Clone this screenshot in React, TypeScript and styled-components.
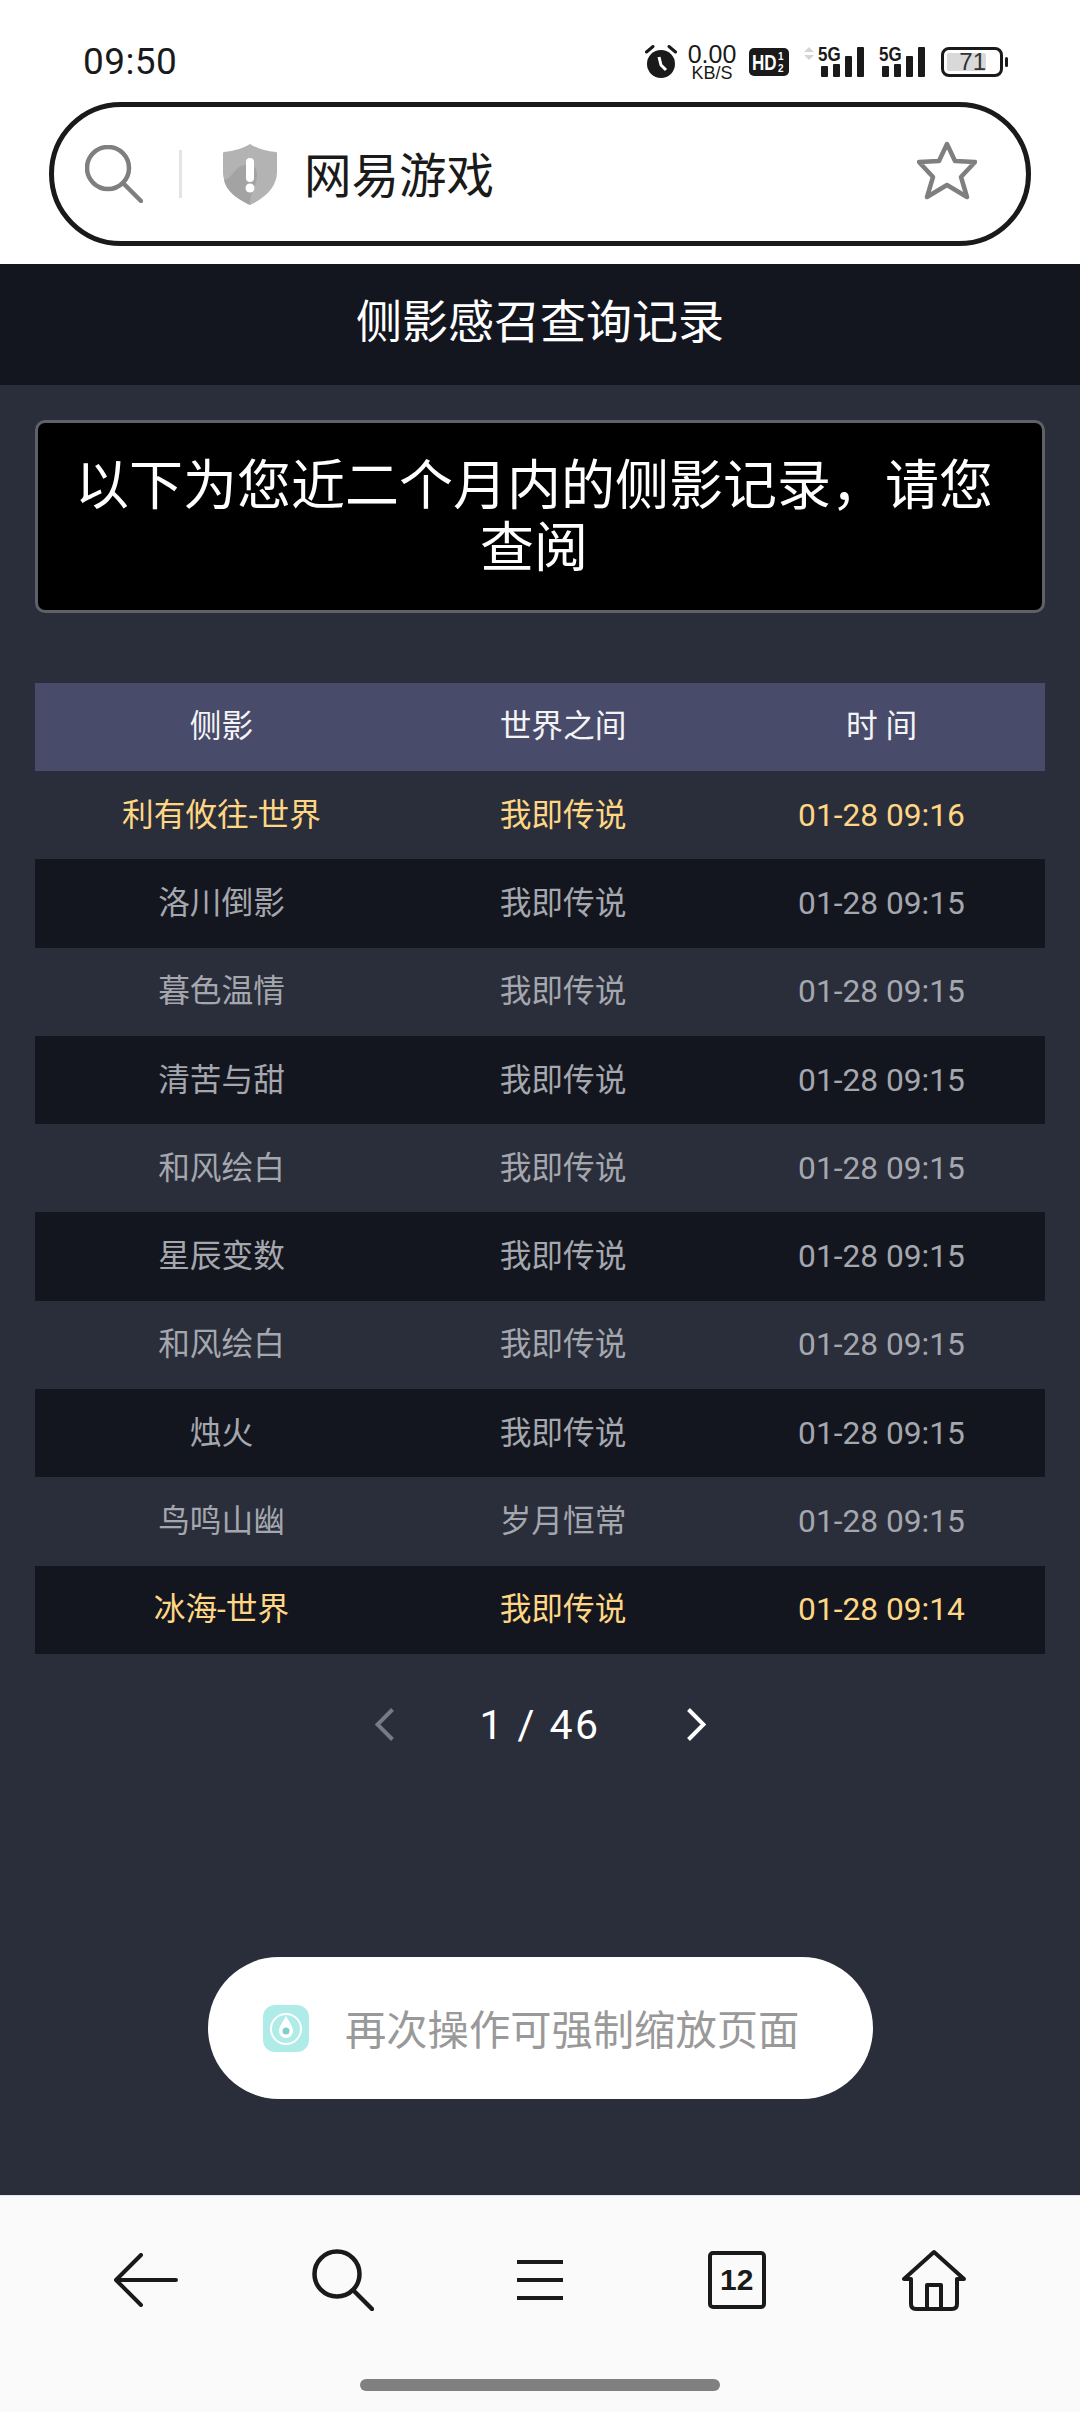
import React from "react";
import styled, { createGlobalStyle } from "styled-components";

const GlobalStyle = createGlobalStyle`
  html, body {
    margin: 0;
    padding: 0;
    background: #2a2e3a;
  }
  * {
    box-sizing: border-box;
  }
`;

const CJK = `Roboto, "Noto Sans CJK SC", sans-serif`;

const Page = styled.div`
  position: relative;
  width: 1080px;
  height: 2412px;
  display: flex;
  flex-direction: column;
  overflow: hidden;
  font-family: ${CJK};
`;

const TopArea = styled.div`
  height: 264px;
  flex: none;
  background: #fff;
  display: flex;
  flex-direction: column;
`;

const StatusBar = styled.div`
  height: 102px;
  padding: 41px 77px 0 83px;
  display: flex;
  justify-content: space-between;
  align-items: flex-start;
`;

const Clock = styled.span`
  font-size: 37px;
  line-height: 42px;
  color: #1a1a1a;
  letter-spacing: 0.4px;
`;

const StatusIcons = styled.div`
  display: flex;
  align-items: center;
  height: 42px;
  margin-top: 0;
`;

const NetSpeed = styled.div`
  width: 52px;
  margin: 0 11px 0 9px;
  display: flex;
  flex-direction: column;
  align-items: center;
  color: #1a1a1a;
  font-family: "Liberation Sans", sans-serif;
`;

const NetValue = styled.span`
  font-size: 25px;
  line-height: 21px;
`;

const NetUnit = styled.span`
  font-size: 18px;
  line-height: 16px;
`;

const SignalSlot = styled.span`
  display: flex;
  margin-left: 15px;
`;

const Battery = styled.div`
  position: relative;
  width: 62px;
  height: 30px;
  margin-left: 16px;
  border: 3px solid #1a1a1a;
  border-radius: 8px;
  padding: 3px 14px 3px 3px;
`;

const BatteryFill = styled.div`
  height: 100%;
  border-radius: 2px;
  background: #d9d9d9;
  color: #333;
  font-size: 24px;
  line-height: 18px;
  text-align: right;
  font-family: "Liberation Sans", sans-serif;
`;

const BatteryNub = styled.span`
  position: absolute;
  right: -8px;
  top: 7px;
  width: 3px;
  height: 10px;
  border-radius: 2px;
  background: #1a1a1a;
`;

const SearchPill = styled.div`
  width: 982px;
  height: 144px;
  margin-left: 49px;
  border: 5px solid #1a1a1a;
  border-radius: 72px;
  display: flex;
  align-items: center;
  padding: 0 49px 0 31px;
`;

const Divider = styled.span`
  width: 3px;
  height: 48px;
  margin: 0 41px 0 36px;
  background: #e4e4e4;
`;

const SearchText = styled.span`
  margin: -3px 0 0 27px;
  flex: 1;
  font-size: 47.5px;
  color: #1a1a1a;
`;

const StarSlot = styled.span`
  display: flex;
  margin-top: -7px;
`;

const Main = styled.main`
  flex: 1;
  background: #2a2e3a;
  display: flex;
  flex-direction: column;
`;

const TitleBar = styled.h1`
  margin: 0;
  height: 121px;
  background: #14161f;
  color: #fff;
  font-size: 46px;
  font-weight: 400;
  line-height: 117px;
  text-align: center;
`;

const Notice = styled.div`
  width: 1010px;
  height: 193px;
  margin: 35px 0 70px 35px;
  padding: 33px 36px 0 24px;
  border: 3px solid #5e6168;
  border-radius: 10px;
  background: #000;
  color: #fff;
  font-size: 54px;
  line-height: 62px;
  text-align: center;
`;

const Table = styled.div`
  width: 1010px;
  margin-left: 35px;
`;

const Row = styled.div<{ $variant?: "head" | "dark" | "plain" }>`
  display: grid;
  grid-template-columns: 373px 310px 327px;
  height: ${({ $variant }) => ($variant === "head" ? "88px" : "88.3px")};
  align-items: center;
  background: ${({ $variant }) =>
    $variant === "head" ? "#484b69" : $variant === "dark" ? "#14161f" : "transparent"};
`;

const Cell = styled.span<{ $tone: "head" | "gold" | "gray" }>`
  text-align: center;
  font-size: 31.7px;
  line-height: 40px;
  white-space: pre;
  padding-top: ${({ $tone }) => ($tone === "head" ? "0" : "1px")};
  color: ${({ $tone }) =>
    $tone === "head" ? "#f4f4f6" : $tone === "gold" ? "#ffd684" : "#a5a7ae"};
`;

const Pager = styled.div`
  margin-top: 54px;
  height: 34px;
  display: flex;
  justify-content: center;
  align-items: center;
`;

const PagerText = styled.span`
  width: 293px;
  text-align: center;
  color: #fff;
  font-size: 41px;
  line-height: 40px;
  letter-spacing: 2.4px;
  white-space: pre;
`;

const Toast = styled.div`
  position: absolute;
  left: 208px;
  top: 1957px;
  width: 665px;
  height: 142px;
  border-radius: 71px;
  background: #fff;
  display: flex;
  align-items: center;
  padding-left: 55px;
`;

const ToastText = styled.span`
  margin: -2px 0 0 36px;
  color: #999;
  font-size: 41.3px;
  white-space: nowrap;
`;

const BottomNav = styled.nav`
  height: 217px;
  flex: none;
  background: #fafafa;
  border-top: 1px solid #e6e6e6;
  display: flex;
  flex-direction: column;
`;

const NavIcons = styled.div`
  height: 170px;
  padding: 0 48px 2px;
  display: grid;
  grid-template-columns: repeat(5, 1fr);
  justify-items: center;
  align-items: center;
`;

const TabBox = styled.div`
  width: 58px;
  height: 58px;
  border: 4px solid #1a1a1a;
  border-radius: 5px;
  color: #1a1a1a;
  font-family: "Liberation Sans", sans-serif;
  font-size: 30px;
  font-weight: 700;
  line-height: 50px;
  text-align: center;
`;

const HomeBar = styled.div`
  width: 360px;
  height: 12px;
  margin: 13px auto 0;
  border-radius: 6px;
  background: #808080;
`;

const AlarmIcon = () => (
  <svg width="32" height="34" viewBox="0 0 32 34">
    <circle cx="16" cy="19" r="14" fill="#1a1a1a" />
    <path d="M14 12l2 8 5 5" fill="none" stroke="#fff" strokeWidth="3" />
    <path d="M1.500 7 8 1.500M30.500 7 24 1.500" stroke="#1a1a1a" strokeWidth="3" strokeLinecap="round" />
  </svg>
);

const HdIcon = () => (
  <svg width="40" height="28" viewBox="0 0 40 28" overflow="visible">
    <rect width="40" height="28" rx="5" fill="#1a1a1a" />
    <text transform="translate(3 22) scale(1 1.25)" fontFamily="Liberation Sans" fontWeight="700" fontSize="17" fill="#fff">HD</text>
    <text x="29" y="12" fontFamily="Liberation Sans" fontWeight="700" fontSize="10" fill="#fff">1</text>
    <text x="29" y="24" fontFamily="Liberation Sans" fontWeight="700" fontSize="10" fill="#fff">2</text>
  </svg>
);

const SignalIcon = ({ arrows }: { arrows?: boolean }) => (
  <svg width={arrows ? 60 : 46} height="32" viewBox={arrows ? "-14 0 60 32" : "0 0 46 32"} overflow="visible">
    {arrows && <path d="M-14 6-9 1-4 6ZM-14 9-9 14-4 9Z" fill="#d4d4d4" />}
    <text transform="translate(0 15) scale(1 1.15)" fontFamily="Liberation Sans" fontWeight="700" fontSize="17" fill="#1a1a1a">5G</text>
    <rect x="3" y="20" width="7" height="11" rx="1" fill="#1a1a1a" />
    <rect x="15" y="18" width="7" height="13" rx="1" fill="#1a1a1a" />
    <rect x="27" y="10" width="7" height="21" rx="1" fill="#1a1a1a" />
    <rect x="39" y="1" width="7" height="30" rx="1" fill="#1a1a1a" />
  </svg>
);

const LensIcon = () => (
  <svg width="58" height="58" viewBox="0 0 58 58" fill="none" stroke="#7f7f7f" strokeWidth="4.500" strokeLinecap="round">
    <circle cx="23" cy="23" r="21" />
    <path d="M38 38 56 56" />
  </svg>
);

const ShieldIcon = () => (
  <svg width="54" height="61" viewBox="0 0 54 61">
    <path d="M27 0C33 4 43 7 53 8c1 0 1 1 1 2v18c0 15-12 26-27 33C12 54 0 43 0 28V10c0-1 0-2 1-2C11 7 21 4 27 0Z" fill="#b3b3b3" />
    <path d="M27 61C12 54 3 46 1 36c5 0 9-8 15-13 8-5 18-3 18 8 0 12-7 16-7 30Z" fill="#a3a3a3" />
    <rect x="23" y="14" width="8" height="24" rx="4" fill="#fff" />
    <circle cx="27" cy="44" r="4.500" fill="#fff" />
  </svg>
);

const StarIcon = () => (
  <svg width="60" height="59" viewBox="0 0 60 59" fill="none" stroke="#7f7f7f" strokeWidth="4.500" strokeLinejoin="round">
    <path d="M30 3 38 20 58 21 44 36 50 56 30 44 10 56 16 36 2 21 22 20Z" />
  </svg>
);

const ChevronIcon = ({ dir, color }: { dir: "left" | "right"; color: string }) => (
  <svg width="19" height="33" viewBox="0 0 19 33" fill="none" stroke={color} strokeWidth="4">
    <path d={dir === "left" ? "M17.500 1.500 2.500 16.500 17.500 31.500" : "M1.500 1.500 16.500 16.500 1.500 31.500"} />
  </svg>
);

const ToastIcon = () => (
  <svg width="46" height="47" viewBox="0 0 46 47">
    <rect width="46" height="47" rx="12" fill="#b0ece7" />
    <circle cx="23" cy="24" r="15" fill="none" stroke="#fff" strokeWidth="2" />
    <path d="M23 11c4 7 7 11 7 15a7 7 0 0 1-14 0c0-4 3-8 7-15Z" fill="#fff" />
    <circle cx="23" cy="26" r="3.500" fill="#7fcfc9" />
  </svg>
);

const BackIcon = () => (
  <svg width="64" height="54" viewBox="0 0 64 54" fill="none" stroke="#1a1a1a" strokeWidth="4" strokeLinecap="round" strokeLinejoin="round">
    <path d="M27 2 2 27 27 52M2 27H62" />
  </svg>
);

const NavSearchIcon = () => (
  <svg width="62" height="62" viewBox="0 0 62 62" fill="none" stroke="#1a1a1a" strokeWidth="4.500" strokeLinecap="round">
    <circle cx="25" cy="25" r="22.500" />
    <path d="M41 41 60 60" />
  </svg>
);

const MenuIcon = () => (
  <svg width="46" height="40" viewBox="0 0 46 40" stroke="#1a1a1a" strokeWidth="4">
    <path d="M0 2H46M0 20H46M0 38H46" />
  </svg>
);

const HomeIcon = () => (
  <svg width="64" height="62" viewBox="0 0 64 62" fill="none" stroke="#1a1a1a" strokeWidth="4" strokeLinejoin="round" strokeLinecap="round">
    <path d="M32 3 2 30H9V55Q9 60 14 60H50Q55 60 55 55V30H62Z" />
    <path d="M25 60V36H39V60" />
  </svg>
);

type Record = { name: string; world: string; time: string; gold?: boolean };

const records: Record[] = [
  { name: "利有攸往-世界", world: "我即传说", time: "01-28 09:16", gold: true },
  { name: "洛川倒影", world: "我即传说", time: "01-28 09:15" },
  { name: "暮色温情", world: "我即传说", time: "01-28 09:15" },
  { name: "清苦与甜", world: "我即传说", time: "01-28 09:15" },
  { name: "和风绘白", world: "我即传说", time: "01-28 09:15" },
  { name: "星辰变数", world: "我即传说", time: "01-28 09:15" },
  { name: "和风绘白", world: "我即传说", time: "01-28 09:15" },
  { name: "烛火", world: "我即传说", time: "01-28 09:15" },
  { name: "鸟鸣山幽", world: "岁月恒常", time: "01-28 09:15" },
  { name: "冰海-世界", world: "我即传说", time: "01-28 09:14", gold: true },
];

export default function App(): JSX.Element {
  return (
    <Page>
      <GlobalStyle />
      <TopArea>
        <StatusBar>
          <Clock>09:50</Clock>
          <StatusIcons>
            <AlarmIcon />
            <NetSpeed>
              <NetValue>0.00</NetValue>
              <NetUnit>KB/S</NetUnit>
            </NetSpeed>
            <HdIcon />
            <SignalSlot>
              <SignalIcon arrows />
            </SignalSlot>
            <SignalSlot>
              <SignalIcon />
            </SignalSlot>
            <Battery>
              <BatteryFill>71</BatteryFill>
              <BatteryNub />
            </Battery>
          </StatusIcons>
        </StatusBar>
        <SearchPill>
          <LensIcon />
          <Divider />
          <ShieldIcon />
          <SearchText>网易游戏</SearchText>
          <StarSlot>
            <StarIcon />
          </StarSlot>
        </SearchPill>
      </TopArea>
      <Main>
        <TitleBar>侧影感召查询记录</TitleBar>
        <Notice>以下为您近二个月内的侧影记录，请您查阅</Notice>
        <Table>
          <Row $variant="head">
            <Cell $tone="head">侧影</Cell>
            <Cell $tone="head">世界之间</Cell>
            <Cell $tone="head">时 间</Cell>
          </Row>
          {records.map((r, i) => (
            <Row key={i} $variant={i % 2 === 1 ? "dark" : "plain"}>
              <Cell $tone={r.gold ? "gold" : "gray"}>{r.name}</Cell>
              <Cell $tone={r.gold ? "gold" : "gray"}>{r.world}</Cell>
              <Cell $tone={r.gold ? "gold" : "gray"}>{r.time}</Cell>
            </Row>
          ))}
        </Table>
        <Pager>
          <ChevronIcon dir="left" color="#777a83" />
          <PagerText>1 / 46</PagerText>
          <ChevronIcon dir="right" color="#fff" />
        </Pager>
      </Main>
      <Toast>
        <ToastIcon />
        <ToastText>再次操作可强制缩放页面</ToastText>
      </Toast>
      <BottomNav>
        <NavIcons>
          <BackIcon />
          <NavSearchIcon />
          <MenuIcon />
          <TabBox>12</TabBox>
          <HomeIcon />
        </NavIcons>
        <HomeBar />
      </BottomNav>
    </Page>
  );
}
